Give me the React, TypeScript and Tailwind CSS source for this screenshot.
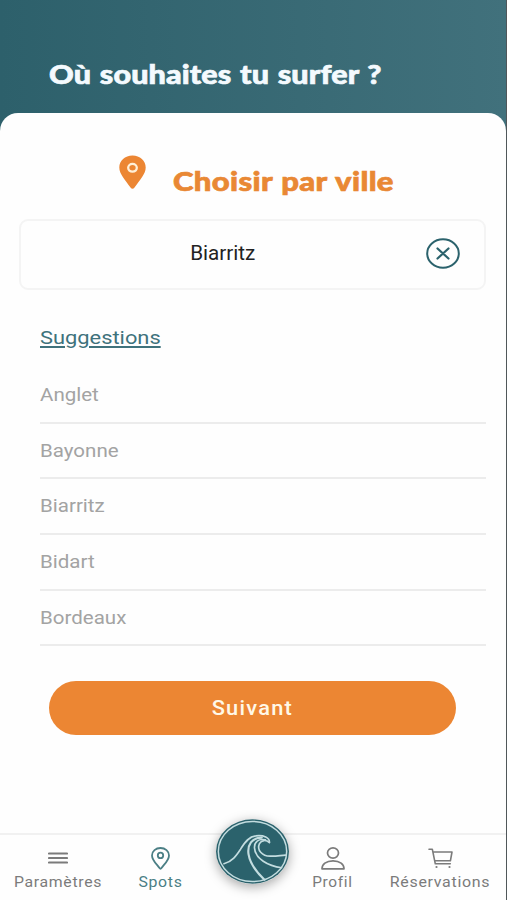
import type { ReactNode } from "react";

const cities = ["Anglet", "Bayonne", "Biarritz", "Bidart", "Bordeaux"];

function WaveLogo() {
  return (
    <svg viewBox="0 0 220 194" className="h-[65px] w-[73px]" fill="none">
      <ellipse cx="110" cy="97" rx="110" ry="97" fill="#2b626c" />
      <ellipse cx="110" cy="97" rx="103" ry="90.5" stroke="#c3dde0" strokeWidth="4.5" />
      <g stroke="#c3dde0" strokeWidth="5" strokeLinecap="round" strokeLinejoin="round">
        <path d="M24 134C50 127 62 108 74 90C88 66 100 52 120 50C144 47 162 56 161 70" />
        <path d="M161 70C151 61 137 62 131 73C122 92 139 111 163 111C180 112 193 109 209 108" />
        <path d="M149 62C128 57 115 69 116 86C118 119 157 141 198 146" />
        <path d="M138 55C108 55 94 77 98 105C103 137 126 163 146 182" strokeWidth="6.5" />
      </g>
    </svg>
  );
}

function Tab({ label, className, labelClass, children }: { label: string; className: string; labelClass: string; children: ReactNode }) {
  return (
    <button className={`flex flex-col items-center pt-[10px] ${className}`}>
      <span className="flex h-[26px] items-center">{children}</span>
      <span className={`mt-[2px] block text-[14px] leading-[18px] tracking-[0.6px] whitespace-nowrap ${labelClass}`}>{label}</span>
    </button>
  );
}

export default function App() {
  return (
    <div className="flex h-[900px] w-[507px] flex-col overflow-hidden border-r border-[#50575a] bg-gradient-to-r from-[#2d606b] to-[#41717c] font-['Roboto',sans-serif]">
      <header className="h-[113px] pt-[57px] pl-[49px]">
        <h1 className="inline-block origin-left scale-x-[1.13] font-['Lato',sans-serif] text-[27px] leading-[34px] font-black tracking-[0.1px] [word-spacing:1.2px] whitespace-nowrap text-[#f4fafe] [-webkit-text-stroke:0.7px_#f4fafe]">
          Où souhaites tu surfer ?
        </h1>
      </header>

      <main className="flex flex-1 flex-col rounded-t-[18px] bg-[#fefefe]">
        <div className="flex h-[106px] pt-[42px] pl-[119px]">
          <svg viewBox="0 0 27 34" className="h-[34px] w-[27px] shrink-0">
            <path d="M13.5 .5C6 .5 .3 5.5 .3 12.5C.3 19 6.5 25.5 11.5 32.5Q13.5 35 15.5 32.5C20.5 25.5 26.7 19 26.7 12.5C26.7 5.5 21 .5 13.5 .5Z" fill="#ec8633" />
            <ellipse cx="13.5" cy="12.8" rx="4.3" ry="3.9" fill="none" stroke="#fff0d8" strokeWidth="2.3" />
          </svg>
          <h2 className="mt-[9px] ml-[27px] origin-left scale-x-[1.15] font-['Lato',sans-serif] text-[27px] leading-[34px] font-black tracking-[0.3px] [word-spacing:1px] whitespace-nowrap text-[#e98834] [-webkit-text-stroke:0.7px_#e98834]">
            Choisir par ville
          </h2>
        </div>

        <div className="mr-[20px] ml-[19px] flex h-[71px] items-center rounded-[9px] border-2 border-[#f4f4f4] pr-[24px]">
          <span className="flex-1 pr-[1px] pb-[2px] text-center text-[19.5px] text-[#222]">
            <span className="inline-block scale-x-[1.06]">Biarritz</span>
          </span>
          <svg viewBox="0 0 34 31" className="mb-[2px] h-[31px] w-[34px]" fill="none" stroke="#2b626c" strokeWidth="2">
            <ellipse cx="17" cy="15.5" rx="15.8" ry="14.2" />
            <path d="M11.5 10.5L22.5 20.5M22.5 10.5L11.5 20.5" strokeWidth="2.2" strokeLinecap="round" />
          </svg>
        </div>

        <section className="mr-[20px] ml-[40px] pt-[36px]">
          <h3 className="inline-block origin-left scale-x-[1.15] text-[19px] leading-[24px] text-[#3f727c] underline decoration-2 underline-offset-2">Suggestions</h3>
          <ul className="mt-[17px]">
            {cities.map((c) => (
              <li key={c} className="h-[55.7px] border-b-2 border-[#ececec] pt-[15px] text-[19px] leading-[24px] text-[#a3a3a3]">
                <span className="inline-block origin-left scale-x-[1.08]">{c}</span>
              </li>
            ))}
          </ul>
        </section>

        <button className="mt-[35px] ml-[49px] h-[54px] w-[407px] rounded-full bg-[#ec8633] text-[19.5px] font-medium tracking-[1.1px] text-[#fff8e8]">
          <span className="inline-block scale-x-[1.12]">Suivant</span>
        </button>

        <nav className="mt-auto flex h-[67px] border-t-2 border-[#f1f1f1] text-[#7b7b7b]">
          <Tab label="Paramètres" className="w-[116px]" labelClass="scale-x-[1.13]">
            <svg viewBox="0 0 20 12" className="h-[12px] w-[20px]" stroke="currentColor" strokeWidth="2.2" strokeLinecap="round">
              <path d="M1 1.5H19M1 6H19M1 10.5H19" />
            </svg>
          </Tab>
          <Tab label="Spots" className="w-[88px] text-[#4b7f85]" labelClass="scale-x-[1.13]">
            <svg viewBox="0 0 19 23" className="h-[23px] w-[19px]" fill="none" stroke="currentColor" strokeWidth="1.8">
              <path d="M9.5 1C4.8 1 1 4.1 1 8.4C1 13.3 6 17.5 8.5 21Q9.5 22.5 10.5 21C13 17.5 18 13.3 18 8.4C18 4.1 14.2 1 9.5 1Z" />
              <circle cx="9.5" cy="8.4" r="2.7" />
            </svg>
          </Tab>
          <div className="flex w-[97px] justify-center">
            <div className="-mt-[16px] h-[65px] w-[73px] rounded-[50%] shadow-[0_3px_12px_rgba(0,0,0,0.35)]">
              <WaveLogo />
            </div>
          </div>
          <Tab label="Profil" className="w-[63px]" labelClass="scale-x-[1.1]">
            <svg viewBox="0 0 24 23" className="h-[23px] w-[24px]" fill="none" stroke="currentColor" strokeWidth="1.7" strokeLinejoin="round">
              <ellipse cx="12" cy="6" rx="5.5" ry="5.1" />
              <path d="M1 21.8C1 17.5 5 13.8 12 13.8S23 17.5 23 21.8Z" />
            </svg>
          </Tab>
          <Tab label="Réservations" className="flex-1 pl-[10px]" labelClass="scale-x-[1.14]">
            <svg viewBox="0 0 25 21" className="h-[21px] w-[25px]" fill="none" stroke="currentColor" strokeWidth="1.6" strokeLinejoin="round" strokeLinecap="round">
              <path d="M1 1.2H4.3L7.3 15.8H22.3M5 4H24L22.4 12.8H6.8" />
              <circle cx="8.5" cy="19" r="1.1" fill="currentColor" stroke="none" />
              <circle cx="21.5" cy="19" r="1.1" fill="currentColor" stroke="none" />
            </svg>
          </Tab>
        </nav>
      </main>
    </div>
  );
}
